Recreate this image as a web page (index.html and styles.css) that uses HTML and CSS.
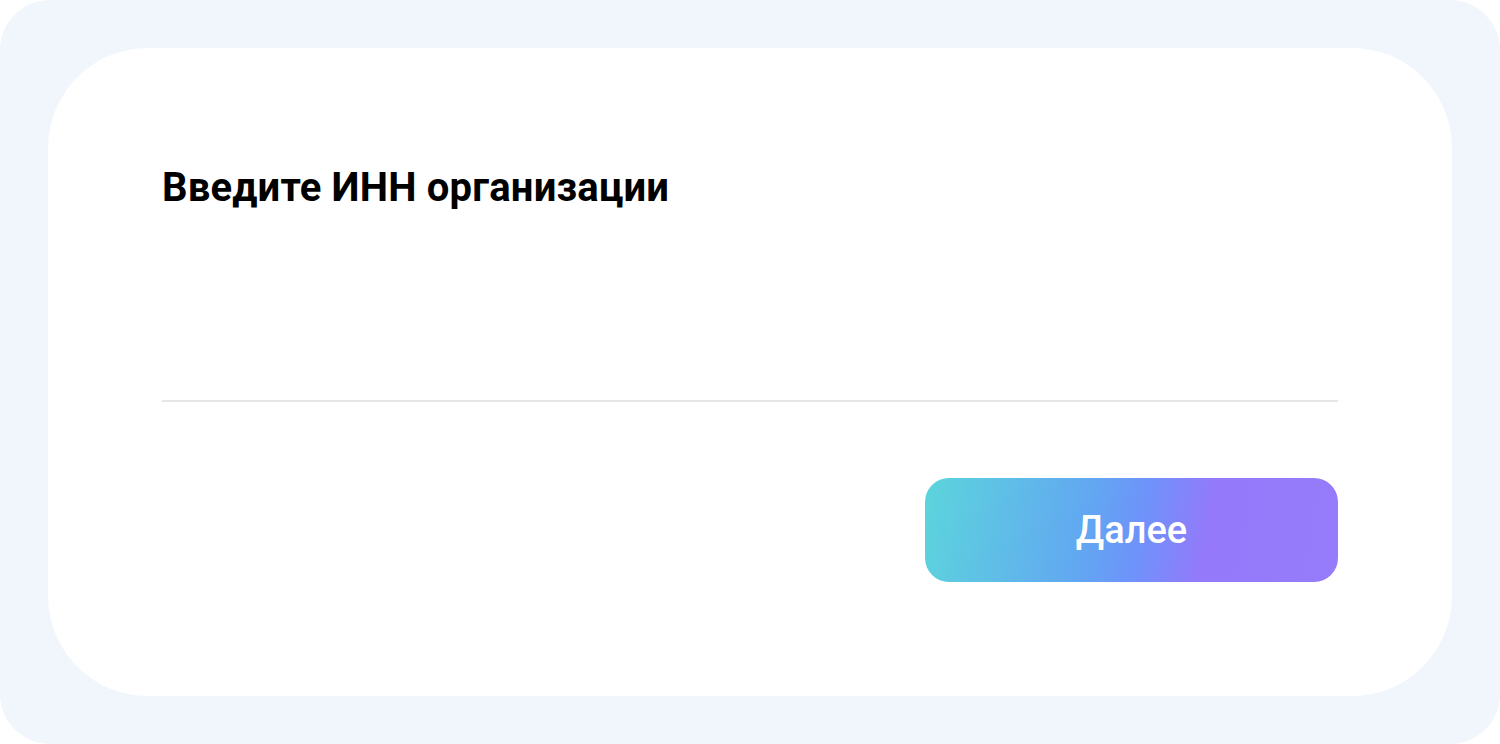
FILE: index.html
```html
<!DOCTYPE html>
<html>
  <head>
    <title>ИНН</title>
    <link rel="stylesheet" href="styles.css">
  </head>
  <body>
    <div class="frame">
      <div class="card">
        <h1 class="title">Введите ИНН организации</h1>
        <input class="inn-input" type="text">
        <div class="actions">
          <button class="next-button">Далее</button>
        </div>
      </div>
    </div>
  </body>
</html>
```

FILE: styles.css
```css
body{
  margin: 0;
  background-color: white;
  font-family: Roboto, "Noto Sans", sans-serif;
}
.frame{
  width: 1500px;
  height: 744px;
  box-sizing: border-box;
  padding: 48px;
  background-color: #f0f6fc;
  border-radius: 50px;
}
.card{
  height: 648px;
  box-sizing: border-box;
  padding: 118px 114px 0 114px;
  background-color: white;
  border-radius: 100px;
  display: flex;
  flex-direction: column;
}
.title{
  margin: 0;
  font-size: 40px;
  font-weight: bold;
  line-height: 44px;
  letter-spacing: 0.2px;
  color: black;
}
.inn-input{
  margin-top: 0;
  height: 190px;
  border: none;
  border-bottom: 2px solid #e6e6e6;
  outline: none;
  font-family: inherit;
  font-size: 32px;
  padding: 0;
}
.actions{
  display: flex;
  justify-content: flex-end;
  margin-top: 76px;
}
.next-button{
  width: 413px;
  height: 104px;
  border: none;
  border-radius: 24px;
  background: linear-gradient(100deg, #5cd5dc 0%, #62a6f2 40%, #6e93fa 52%, #9479fa 68%, #967bfa 100%);
  color: white;
  font-family: inherit;
  font-size: 38px;
  font-weight: 500;
  cursor: pointer;
}
```
